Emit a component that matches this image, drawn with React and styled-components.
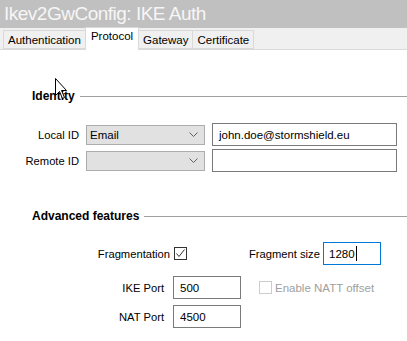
import React from 'react'
import styled, { createGlobalStyle } from 'styled-components'

const GlobalStyle = createGlobalStyle`
  html, body {
    margin: 0;
    padding: 0;
    background: #fff;
  }
  body {
    font-family: "Liberation Sans", Arial, sans-serif;
    font-size: 11px;
    color: #000;
  }
`

const Window = styled.div`
  position: relative;
  width: 407px;
  height: 341px;
  background: #fff;
  overflow: hidden;
`

const TitleBar = styled.div`
  height: 28px;
  background: #c0c0c0;
  color: #f6f6f6;
  font-size: 19px;
  line-height: 27px;
  padding-left: 4px;
  letter-spacing: -0.5px;
`

const TabStrip = styled.div`
  display: flex;
  align-items: flex-end;
  height: 21px;
  padding-left: 3px;
  background: #f0f0f0;
  border-bottom: 1px solid #d9d9d9;
`

const Tab = styled.div`
  box-sizing: border-box;
  height: ${p => (p.active ? '23px' : '19px')};
  margin-bottom: ${p => (p.active ? '-1px' : '0')};
  padding: ${p => (p.active ? '1px 5px 0' : '2px 4px 0')};
  background: ${p => (p.active ? '#fff' : '#f0f0f0')};
  border: 1px solid #d9d9d9;
  border-bottom: ${p => (p.active ? 'none' : '1px solid #d9d9d9')};
  margin-left: ${p => (p.first ? 0 : -1)}px;
  font-size: 11.5px;
  line-height: 15px;
  white-space: nowrap;
`

const Content = styled.div`
  padding-top: 37px;
`

const Heading = styled.div`
  display: flex;
  align-items: center;
  gap: 5px;
  padding-left: 32px;
  margin-top: ${p => p.top || 0}px;
  margin-bottom: ${p => p.gap}px;
  font-size: 12px;
  font-weight: bold;
  height: 18px;
`

const Rule = styled.div`
  flex: 1;
  height: 1px;
  background: #a0a0a0;
`

const Row = styled.div`
  display: flex;
  align-items: center;
  height: ${p => p.h || 23}px;
  margin-bottom: ${p => p.mb || 0}px;
`

const Label = styled.div`
  box-sizing: border-box;
  width: ${p => p.w}px;
  text-align: ${p => (p.left ? 'left' : 'right')};
  padding-right: ${p => p.pr || 0}px;
  margin-left: ${p => p.ml || 0}px;
  font-size: 11.2px;
  white-space: nowrap;
`

const Select = styled.div`
  box-sizing: border-box;
  display: flex;
  align-items: center;
  justify-content: space-between;
  width: 119px;
  height: 20px;
  margin-left: ${p => p.ml || 0}px;
  padding: 0 6px 0 3px;
  background: #e1e1e1;
  border: 1px solid #adadad;
  font-size: 11.5px;
`

const TextBox = styled.div`
  box-sizing: border-box;
  display: flex;
  align-items: center;
  width: ${p => p.w}px;
  height: ${p => p.h || 23}px;
  margin-left: ${p => p.ml || 0}px;
  padding-left: ${p => p.pl || 6}px;
  background: #fff;
  border: 1px solid ${p => (p.focused ? '#0078d7' : '#7a7a7a')};
  font-size: 11.5px;
`

const Caret = styled.span`
  display: inline-block;
  width: 1px;
  height: 15px;
  background: #000;
  margin-left: 1px;
`

const CheckBox = styled.div`
  box-sizing: border-box;
  display: flex;
  align-items: center;
  justify-content: center;
  width: 13px;
  height: 13px;
  margin-left: ${p => p.ml || 0}px;
  border: 1px solid ${p => (p.disabled ? '#cccccc' : '#333333')};
  background: #fff;
`

const CheckLabel = styled.span`
  margin-left: 3px;
  font-size: 11.5px;
  color: ${p => (p.disabled ? '#a0a0a0' : '#000')};
`

const Pointer = styled.svg`
  position: absolute;
  left: 55px;
  top: 78px;
`

const Chevron = () => (
  <svg width="9" height="5" viewBox="0 0 9 5">
    <path d="M0.5 0.5 L4.5 4.5 L8.5 0.5" fill="none" stroke="#606060" strokeWidth="1" />
  </svg>
)

const App = () => (
  <Window>
    <GlobalStyle />
    <TitleBar>Ikev2GwConfig: IKE Auth</TitleBar>
    <TabStrip>
      <Tab first>Authentication</Tab>
      <Tab active>Protocol</Tab>
      <Tab>Gateway</Tab>
      <Tab>Certificate</Tab>
    </TabStrip>
    <Content>
      <Heading gap={18}>
        <span>Identity</span>
        <Rule />
      </Heading>
      <Row mb={3}>
        <Label w={80} pr={1}>Local ID</Label>
        <Select ml={6}>
          <span>Email</span>
          <Chevron />
        </Select>
        <TextBox w={185} ml={7}>john.doe@stormshield.eu</TextBox>
      </Row>
      <Row>
        <Label w={80} pr={1}>Remote ID</Label>
        <Select ml={6}>
          <span />
          <Chevron />
        </Select>
        <TextBox w={185} ml={7} />
      </Row>
      <Heading gap={17} top={35}>
        <span>Advanced features</span>
        <Rule />
      </Heading>
      <Row mb={11}>
        <Label w={171} pr={1}>Fragmentation</Label>
        <CheckBox ml={3}>
          <svg width="11" height="11" viewBox="0 0 11 11">
            <path d="M1.5 5.5 L4 8.5 L9.5 1.5" fill="none" stroke="#333" strokeWidth="1" />
          </svg>
        </CheckBox>
        <Label w={74} ml={62} left>Fragment size</Label>
        <TextBox w={58} focused pl={5}>
          1280
          <Caret />
        </TextBox>
      </Row>
      <Row mb={6}>
        <Label w={165} pr={1}>IKE Port</Label>
        <TextBox w={68} ml={8}>500</TextBox>
        <CheckBox ml={18} disabled />
        <CheckLabel disabled>Enable NATT offset</CheckLabel>
      </Row>
      <Row>
        <Label w={165} pr={1}>NAT Port</Label>
        <TextBox w={68} ml={8}>4500</TextBox>
      </Row>
    </Content>
    <Pointer width="13" height="22" viewBox="0 0 13 22">
      <path
        d="M0.5 0.5 L0.5 17.5 L4.5 13.5 L7.5 20.5 L9.5 19.5 L6.5 12.5 L11.5 12.5 Z"
        fill="#fff"
        stroke="#000"
        strokeWidth="1"
      />
    </Pointer>
  </Window>
)

export default App
